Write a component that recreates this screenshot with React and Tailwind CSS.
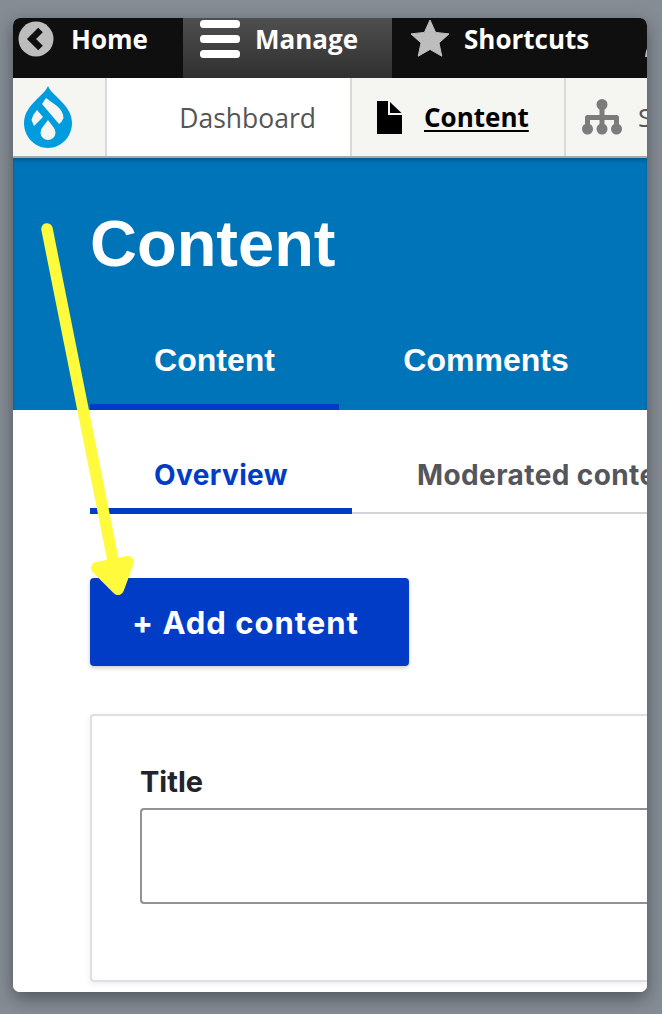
import { useState } from 'react'

const lucida = "[font-family:'Open_Sans',sans-serif]"
const inter = "[font-family:Inter,sans-serif]"
const helvetica = "[font-family:'Liberation_Sans',sans-serif]"

function DrupalDrop() {
    return (
        <svg width="48" height="62" viewBox="0 0 48 62">
            <path
                fill="#009cde"
                fillRule="evenodd"
                d="M24 0c2 5 6 8 11 13 7 7 13 14 13 24 0 14-11 25-24 25S0 51 0 37c0-10 6-17 13-24C18 8 22 5 24 0zM22 12l-4 6 17 20q3-2 4.500-6Q39 25 33 20zM13 24q-4 4-5.500 10L10 40l9-9zM24 34l6 8a7.500 7.500 0 1 1-12 0z"
            />
        </svg>
    )
}

function TopTab({ icon, label, active, width, children }) {
    return (
        <div className={`${width} h-full shrink-0 flex items-center pb-[18px] overflow-hidden ${active ? 'bg-gradient-to-b from-[#4f4f4f] to-[#303030]' : ''}`}>
            {icon}
            <span className={`${lucida} shrink-0 text-[26px] font-bold text-white`}>{label}</span>
            {children}
        </div>
    )
}

export default function App() {
    const [title, setTitle] = useState('')

    return (
        <div className="h-[1014px] overflow-hidden bg-[#858c94] pt-[18px] pl-[13px] pr-[15px] pb-[22px] relative">
            <div className="h-full bg-white rounded-[7px] overflow-hidden flex flex-col shadow-[0_6px_18px_rgba(0,0,0,0.4)]">
                {/* toolbar */}
                <div className="h-[60px] shrink-0 bg-[#0f0f0f] flex">
                    <TopTab
                        width="w-[170px]"
                        label="Home"
                        icon={
                            <svg className="shrink-0 ml-[5px] mr-[17px]" width="36" height="36" viewBox="0 0 36 36">
                                <circle cx="18" cy="18" r="17.500" fill="#bdbdbd" />
                                <path d="M22.500 9 13.500 18l9 9" fill="none" stroke="#0f0f0f" strokeWidth="6.500" />
                            </svg>
                        }
                    />
                    <TopTab
                        active
                        width="w-[209px]"
                        label="Manage"
                        icon={
                            <svg className="shrink-0 ml-[17px] mr-[15px]" width="40" height="38" viewBox="0 0 40 38">
                                <rect y="0" width="40" height="8" rx="3.500" fill="#fff" />
                                <rect y="15" width="40" height="8" rx="3.500" fill="#fff" />
                                <rect y="30" width="40" height="8" rx="3.500" fill="#fff" />
                            </svg>
                        }
                    />
                    <TopTab
                        width="w-[255px]"
                        label="Shortcuts"
                        icon={
                            <svg className="shrink-0 ml-[19px] mr-[15px]" width="38" height="38" viewBox="0 0 38 38">
                                <path d="M19 0l5.600 12.400 13.400 1.500-10 9 2.800 13.300L19 29.400 7.200 36.200 10 22.900 0 13.900l13.400-1.500z" fill="#bdbdbd" stroke="#bdbdbd" strokeLinejoin="round" />
                            </svg>
                        }
                    >
                        <svg className="ml-[56px] shrink-0" width="36" height="36" viewBox="0 0 36 36">
                            <circle cx="18" cy="10" r="9" fill="#bdbdbd" />
                            <path d="M0 36q1-12 9-17 9 5 18 0 8 5 9 17z" fill="#bdbdbd" />
                        </svg>
                    </TopTab>
                </div>

                {/* admin menu */}
                <div className="h-[80px] shrink-0 bg-[#f5f5f2] flex border-b-2 border-[#a9a9a9]">
                    <div className="w-[94px] shrink-0 flex items-center pl-[11px] border-r-2 border-[#d9d9d6]">
                        <DrupalDrop />
                    </div>
                    <div className="w-[245px] shrink-0 bg-white flex items-center justify-end pr-[34px] pt-[3px] border-r-2 border-[#d9d9d6]">
                        <span className={`${lucida} text-[26.5px] text-[#555]`}>Dashboard</span>
                    </div>
                    <div className="w-[214px] shrink-0 flex items-center border-r-2 border-[#d9d9d6] pl-[25px]">
                        <svg className="shrink-0 mr-[22px]" width="25" height="33" viewBox="0 0 25 33">
                            <path d="M0 0h11v14h14v19H0z" fill="#000" />
                            <path d="M13 1 24.500 12H13z" fill="#000" />
                        </svg>
                        <span className={`${lucida} text-[26px] font-bold text-black underline underline-offset-[3px]`}>Content</span>
                    </div>
                    <div className="flex-1 min-w-0 flex items-center pl-[16px] overflow-hidden">
                        <svg className="mr-[16px] shrink-0" width="40" height="36" viewBox="0 0 40 36">
                            <g fill="#7c7c7c">
                                <circle cx="20" cy="5.500" r="5.500" />
                                <circle cx="5.500" cy="30" r="5.500" />
                                <circle cx="20" cy="30" r="5.500" />
                                <circle cx="34.500" cy="30" r="5.500" />
                                <path d="M17.500 8h5v8h12q2.500 0 2.500 2.500V28h-5v-7h-9.500v7h-5v-7H8v7H3v-9.500Q3 16 5.500 16h12z" />
                            </g>
                        </svg>
                        <span className={`${lucida} text-[26px] text-[#555]`}>Structure</span>
                    </div>
                </div>

                {/* page header */}
                <div className="h-[252px] shrink-0 bg-[#0074b8] shadow-[inset_0_3px_3px_rgba(0,0,0,0.2)] flex flex-col justify-end pl-[77px]">
                    <h1 className={`${helvetica} text-[65px] leading-none font-bold text-white mb-[34px]`}>Content</h1>
                    <div className={`${helvetica} flex h-[100px] text-[32px] font-bold text-white`}>
                        <div className="w-[249px] flex items-center justify-center border-b-[6px] border-[#003cc5] pt-[6px]">Content</div>
                        <div className="w-[294px] flex items-center justify-center">Comments</div>
                    </div>
                </div>

                {/* content */}
                <div className="flex-1 bg-white pl-[77px] overflow-hidden">
                    <div className={`${inter} h-[104px] flex items-end border-b-2 border-[#d4d4d8] whitespace-nowrap text-[28px] tracking-[0.4px] font-bold`}>
                        <div className="w-[262px] shrink-0 h-[66px] -mb-[2px] flex items-center justify-center border-b-[6px] border-[#003cc5] text-[#003cc5] pb-[6px]">Overview</div>
                        <div className="ml-[65px] shrink-0 h-[64px] flex items-center pb-[10px] text-[#55565b]">Moderated content</div>
                    </div>

                    <button className={`${inter} mt-[64px] w-[319px] h-[88px] pr-[8px] pt-[2px] rounded-[4px] bg-[#003cc5] text-white text-[31px] tracking-[1px] font-bold shadow-[0_2px_4px_rgba(0,0,0,0.2)] block`}>
                        + Add content
                    </button>

                    <div className="mt-[48px] h-[268px] bg-white border-2 border-r-0 border-[#dedfe4] rounded-l-[4px] shadow-[0_2px_6px_rgba(0,0,0,0.08)] pl-[48px] pt-[50px]">
                        <label className={`${inter} block text-[29px] leading-[32px] font-bold text-[#232429] mb-[10px]`}>Title</label>
                        <input
                            value={title}
                            onChange={(e) => setTitle(e.target.value)}
                            className="block w-full h-[96px] border-2 border-r-0 border-[#919297] rounded-l-[4px] outline-none"
                        />
                    </div>
                </div>
            </div>

            {/* annotation arrow */}
            <svg className="absolute left-0 top-0 pointer-events-none" width="662" height="1014" viewBox="0 0 662 1014">
                <path d="M47 229 114 565" fill="none" stroke="#fffb3c" strokeWidth="11.500" strokeLinecap="round" />
                <path d="M97 568 128 562 118 589z" fill="#fffb3c" stroke="#fffb3c" strokeWidth="12" strokeLinejoin="round" />
            </svg>
        </div>
    )
}
